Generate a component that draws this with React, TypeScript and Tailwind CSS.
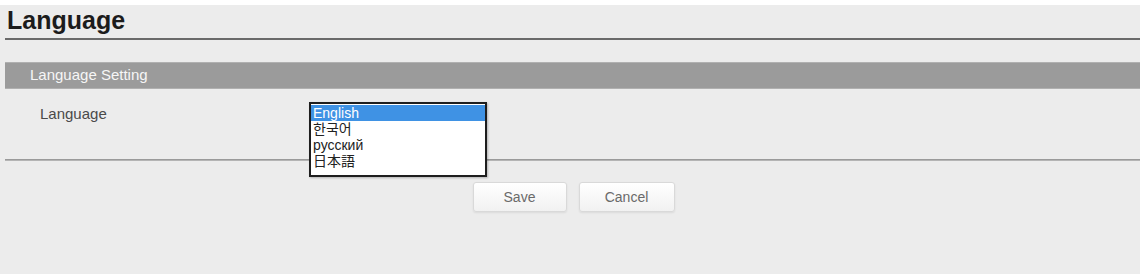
const languages = [
  { label: "English", font: "'Liberation Sans', Arial, sans-serif" },
  { label: "한국어", font: "'Liberation Sans', 'Noto Sans CJK KR', sans-serif" },
  { label: "русский", font: "'Liberation Sans', Arial, sans-serif" },
  { label: "日本語", font: "'Liberation Sans', 'Noto Sans CJK JP', sans-serif" },
];

export default function App() {
  const selected = "English";

  return (
    <div className="h-[274px] w-[1140px] overflow-hidden border-t-[5px] border-white bg-[#ececec] font-['Liberation_Sans',Arial,sans-serif]">
      <div className="pl-[5px]">
        {/* Page title */}
        <h1 className="h-[33px] pl-[2px] text-[25px] font-bold leading-[30px] text-[#1c1c1c]">Language</h1>
        <div className="h-[2px] bg-[#6a6a6a]" />

        {/* Section header */}
        <div className="mt-[22px] flex h-[27px] items-center border-y border-[#b0b0b0] bg-[#9b9b9b] pl-[25px] text-[15px] text-[#f6f6f6]">
          Language Setting
        </div>

        {/* Setting row */}
        <div className="flex h-[70px] items-start">
          <div className="w-[304px] pl-[35px] pt-[16px] text-[15px] leading-[17px] text-[#4a4a4a]">Language</div>
          <div className="relative z-10 mt-[13px] h-[75px] w-[178px] border-2 border-[#1e1e1e] bg-white pt-[1px] shadow-[1px_1px_2px_rgba(0,0,0,0.25)]">
            {languages.map((l) => (
              <div
                key={l.label}
                style={{ fontFamily: l.font }}
                className={
                  l.label === selected
                    ? "h-[16px] bg-[#3f92e4] pl-[2px] text-[14px] leading-[16px] text-white"
                    : "h-[16px] pl-[2px] text-[14px] leading-[16px] text-[#222]"
                }
              >
                {l.label}
              </div>
            ))}
          </div>
        </div>
        <div className="h-[2px] border-t border-[#9a9a9a] bg-[#b4b4b4]" />

        {/* Actions */}
        <div className="mt-[21px] flex justify-center gap-[12px] pl-[2px]">
          <button className="h-[30px] w-[94px] rounded-[3px] border border-[#d9d9d9] bg-gradient-to-b from-white to-[#f1f1f1] text-[14px] text-[#6a6a6a] shadow-[0_1px_2px_rgba(0,0,0,0.08)]">
            Save
          </button>
          <button className="h-[30px] w-[96px] rounded-[3px] border border-[#d9d9d9] bg-gradient-to-b from-white to-[#f1f1f1] text-[14px] text-[#6a6a6a] shadow-[0_1px_2px_rgba(0,0,0,0.08)]">
            Cancel
          </button>
        </div>
      </div>
    </div>
  );
}
